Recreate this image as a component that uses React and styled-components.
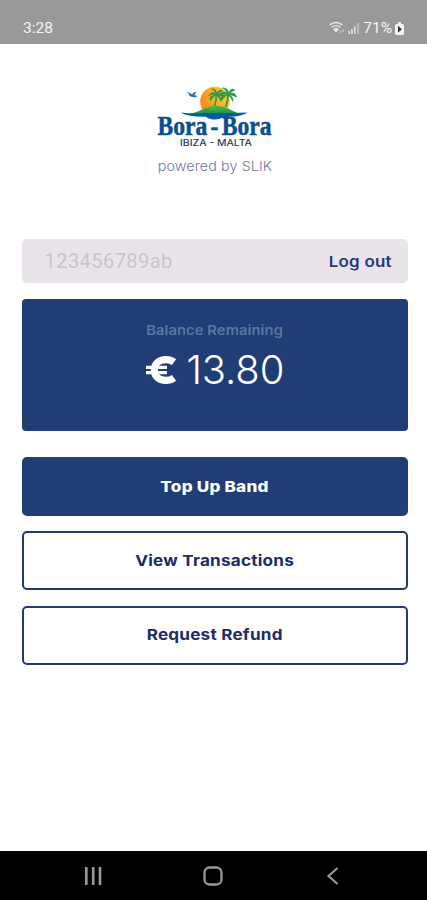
import styled, { createGlobalStyle } from "styled-components";

const GlobalStyle = createGlobalStyle`
  * {
    box-sizing: border-box;
  }
  body {
    margin: 0;
    background: #fff;
    font-family: Inter, "Liberation Sans", sans-serif;
  }
`;

const Screen = styled.div`
  height: 900px;
  display: flex;
  flex-direction: column;
  overflow: hidden;
`;

const StatusBar = styled.header`
  height: 44px;
  flex: none;
  display: flex;
  justify-content: space-between;
  align-items: center;
  padding: 12px 23px 0 23px;
  background: #999;
  color: #f4f4f4;
  font: 400 15.5px/20px Roboto, sans-serif;
`;

const StatusIcons = styled.div`
  display: flex;
  align-items: center;
  gap: 3px;
`;

const Content = styled.main`
  flex: 1;
  padding: 41px 19px 0 21.5px;
  display: flex;
  flex-direction: column;
`;

const Brand = styled.div`
  height: 154px;
  display: flex;
  flex-direction: column;
  align-items: center;
`;

// Widens a label to the broad letterforms of the brand's typeface
const Wide = styled.span`
  display: inline-block;
  white-space: nowrap;
  transform: scaleX(${(props) => props.$scale || 1.14});
  transform-origin: ${(props) => props.$origin || "center"};
`;

const PoweredBy = styled.div`
  margin-top: 5px;
  color: #7475a0;
  font-size: 13px;
  font-weight: 300;
  line-height: 20px;
  letter-spacing: 0.1px;
`;

const BandRow = styled.div`
  height: 44px;
  flex: none;
  display: flex;
  justify-content: space-between;
  align-items: center;
  padding: 0 16px 0 23px;
  border-radius: 5px;
  background: #e8e4ea;
`;

const BandId = styled.span`
  color: #c9c5cc;
  font: 400 20px/24px Roboto, sans-serif;
  letter-spacing: 0.45px;
`;

const LogOut = styled.a`
  color: #253973;
  font-size: 15px;
  font-weight: 600;
  letter-spacing: 0.2px;
`;

const BalanceCard = styled.section`
  height: 132px;
  flex: none;
  margin: 16px 0 26px;
  padding-top: 20.5px;
  display: flex;
  flex-direction: column;
  align-items: center;
  border-radius: 4px;
  background: #203e75;
`;

const BalanceLabel = styled.div`
  color: #5c75a3;
  font-size: 13px;
  font-weight: 600;
  line-height: 20px;
  letter-spacing: 0.1px;
`;

const Amount = styled.div`
  display: flex;
  align-items: center;
  gap: 9px;
  margin-top: 6px;
  color: #fff;
  font-size: 40px;
  font-weight: 300;
  line-height: 48px;
  letter-spacing: -0.1px;
`;

const Actions = styled.div`
  display: flex;
  flex-direction: column;
  gap: 15.4px;
`;

const Action = styled.button`
  height: 59px;
  padding: 0 0 1px;
  border: 2px solid ${(props) => (props.$primary ? "#203e75" : "#28376f")};
  border-radius: 5px;
  background: ${(props) => (props.$primary ? "#203e75" : "#fff")};
  color: ${(props) => (props.$primary ? "#fff" : "#1d2b68")};
  font-family: inherit;
  font-size: 15px;
  font-weight: ${(props) => (props.$primary ? 800 : 700)};
  letter-spacing: 0.2px;
`;

const NavBar = styled.nav`
  height: 49px;
  flex: none;
  display: flex;
  justify-content: space-between;
  align-items: center;
  padding: 1px 84px 0 83px;
  background: #000;
`;

const Palm = ({ x, y, size }) => (
  <g transform={`translate(${x} ${y}) scale(${size})`} fill="#23994a">
    <path d="M-0.5 0Q0 7-3 15L-1 15Q2 7 1 0Z" />
    <path d="M0 1Q-5-5-9 2Q-4-0.5 0 1Q-9 2-7 8Q-4 4 0 1Q-3-7-6-6Q1-7 1 0Q4-7 8-4Q4-2 1 1Q8-3 10 4Q6 2 1 1Q7 3 6 9Q4 4 0 1Z" stroke="#23994a" strokeWidth="0.7" />
  </g>
);

const Logo = () => (
  <svg width="120" height="66" viewBox="0 0 120 66" overflow="visible" role="img" aria-label="Bora-Bora Ibiza Malta">
    <defs>
      <linearGradient id="sun" x1="0" y1="0.6" x2="1" y2="0.2">
        <stop offset="0" stopColor="#f58a1f" />
        <stop offset="0.8" stopColor="#fcc42d" />
      </linearGradient>
      <linearGradient id="island" x1="0" y1="0" x2="0" y2="1">
        <stop offset="0" stopColor="#61b33b" />
        <stop offset="1" stopColor="#179150" />
      </linearGradient>
    </defs>
    <circle cx="60" cy="16.5" r="14.8" fill="url(#sun)" />
    <Palm x={61} y={9} size={0.82} />
    <Palm x={72.5} y={8.5} size={0.9} />
    <path d="M34 29Q41 28 47 24.5Q61 17 76 25Q81 28 87 29Z" fill="url(#island)" />
    <path
      d="M25.5 27.5Q38 29 51 28Q66 28.5 92.5 27.5Q87 31.5 74 31.8Q71 33 68 32.2Q64 35 58 34.5Q53 34 51 31.8Q33 32 25.5 27.5Z"
      fill="#005da0"
    />
    <path
      d="M31 7.3Q35 6.8 37 9.5Q38 7 41.5 6.8L39.3 10Q42 10 42 12Q37 13 34 10.5Q35 8.3 31 7.3Z"
      fill="#2676a9"
    />
    <text
      x="2.5"
      y="49.5"
      textLength="114"
      lengthAdjust="spacingAndGlyphs"
      wordSpacing="-3"
      fill="#09508c"
      stroke="#09508c"
      strokeWidth="0.5"
      fontFamily='"Liberation Serif", serif'
      fontWeight="700"
      fontSize="27"
    >
      Bora - Bora
    </text>
    <text
      x="25"
      y="61.3"
      textLength="72"
      lengthAdjust="spacingAndGlyphs"
      fill="#30356f"
      fontFamily="Inter, sans-serif"
      fontWeight="500"
      fontSize="8.8"
    >
      IBIZA - MALTA
    </text>
  </svg>
);

const WifiIcon = () => (
  <svg width="16" height="14" viewBox="0 0 16 14" fill="none" stroke="#ececec" strokeWidth="1.3">
    <path d="M0.6 4Q7-1 13.4 4M2.7 6.2Q7 3 11.3 6.2M4.8 8.2Q7 7 9.2 8.2" />
    <path d="M5.5 8.8L7 10.6L8.5 8.8Z" fill="#ececec" />
    <path d="M11.5 9V12M14 8V11" strokeWidth="0.9" stroke="#ccc" />
  </svg>
);

const SignalIcon = () => (
  <svg width="12" height="14" viewBox="0 0 12 14" stroke="#e4e4e4" strokeWidth="1.5">
    <path d="M1.2 10V13M4 8V13M6.8 5.5V13" />
    <path d="M10 2V13" stroke="#c4c4c4" />
  </svg>
);

const BatteryIcon = () => (
  <svg width="9" height="13" viewBox="0 0 9 13">
    <path d="M3 0H6V2H7.5Q9 2 9 3.5V11.5Q9 13 7.5 13H1.5Q0 13 0 11.5V3.5Q0 2 1.5 2H3Z" fill="#f4f4f4" />
    <path d="M3 3.8L7 7.3L3 10.5Z" fill="#333" />
  </svg>
);

const EuroIcon = () => (
  <svg width="32" height="30" viewBox="0 0 32 30" fill="none" stroke="#fff">
    <path d="M29 7.2Q25.5 4.6 21 4.6C13.5 4.6 9.3 9 9.3 15S13.5 25.4 21 25.4Q25.5 25.4 29 22.8" strokeWidth="7.2" />
    <path d="M1 12.3H22M1 17.6H22" strokeWidth="3.2" />
  </svg>
);

const RecentIcon = () => (
  <svg width="20" height="20" viewBox="0 0 20 20" stroke="#999" strokeWidth="2.6">
    <path d="M3.3 1V19M10.2 1V19M17 1V19" />
  </svg>
);

const HomeIcon = () => (
  <svg width="20" height="20" viewBox="0 0 20 20" fill="none" stroke="#999" strokeWidth="2.3">
    <rect x="1.5" y="1.5" width="17" height="17" rx="5" />
  </svg>
);

const BackIcon = () => (
  <svg width="20" height="20" viewBox="0 0 20 20" fill="none" stroke="#999" strokeWidth="2.2">
    <path d="M14.5 2L5.5 10L14.5 18" />
  </svg>
);

const App = () => {
  return (
    <>
      <GlobalStyle />
      <Screen>
        <StatusBar>
          <span>3:28</span>
          <StatusIcons>
            <WifiIcon />
            <SignalIcon />
            <span>71%</span>
            <BatteryIcon />
          </StatusIcons>
        </StatusBar>
        <Content>
          <Brand>
            <Logo />
            <PoweredBy>
              <Wide $scale={1.1}>powered by SLIK</Wide>
            </PoweredBy>
          </Brand>
          <BandRow>
            <BandId>123456789ab</BandId>
            <LogOut>
              <Wide $scale={1.13} $origin="right">Log out</Wide>
            </LogOut>
          </BandRow>
          <BalanceCard>
            <BalanceLabel>
              <Wide $scale={1.13}>Balance Remaining</Wide>
            </BalanceLabel>
            <Amount>
              <EuroIcon />
              <span>13.80</span>
            </Amount>
          </BalanceCard>
          <Actions>
            <Action $primary>
              <Wide>Top Up Band</Wide>
            </Action>
            <Action>
              <Wide>View Transactions</Wide>
            </Action>
            <Action>
              <Wide>Request Refund</Wide>
            </Action>
          </Actions>
        </Content>
        <NavBar>
          <RecentIcon />
          <HomeIcon />
          <BackIcon />
        </NavBar>
      </Screen>
    </>
  );
};

export default App;
